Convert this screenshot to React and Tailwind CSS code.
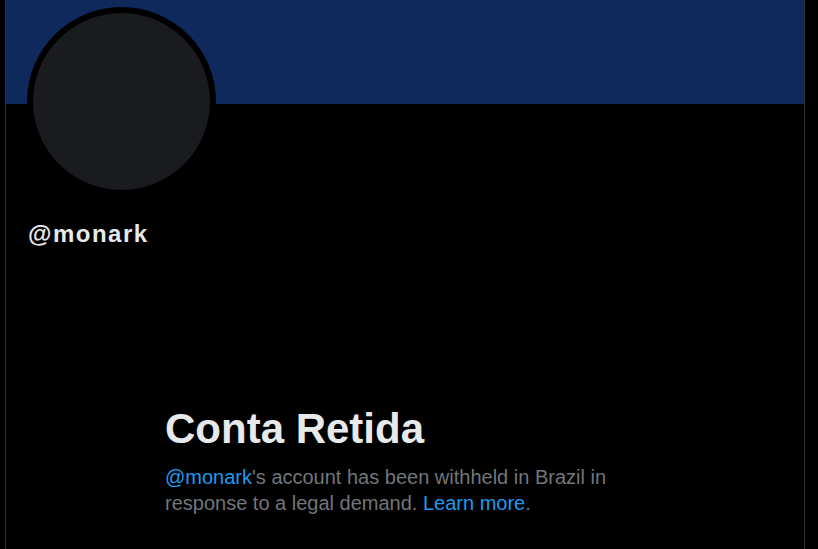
import React from 'react';

const WithheldProfile = () => {
  return (
    <div className="min-h-screen bg-black" style={{ fontFamily: '"Liberation Sans", Arial, sans-serif' }}>
      <div className="ml-[5px] w-[800px] min-h-[549px] border-x border-[#2f3336] relative">
        {/* Banner */}
        <div className="h-[104px] bg-[#0f295c]" />

        {/* Avatar */}
        <div className="absolute left-[21px] top-[7px] w-[189px] h-[189px] rounded-full bg-black p-[6px]">
          <div className="w-full h-full rounded-full bg-[#1a1b1e]" />
        </div>

        {/* Handle */}
        <div className="pl-[22px] pt-[116px]">
          <h1 className="text-[24px] leading-[28px] font-bold tracking-[1.5px] text-[#e7e9ea]">@monark</h1>
        </div>

        {/* Withheld notice */}
        <div className="pl-[159px] pt-[157px] w-[620px]">
          <h2 className="text-[42px] leading-[48px] font-bold text-[#e7e9ea]">Conta Retida</h2>
          <p className="mt-[11px] w-[460px] text-[20px] leading-[26px] text-[#71767b]">
            <span className="text-[#1d9bf0]">@monark</span>'s account has been withheld in Brazil in response to a legal demand.{' '}
            <span className="text-[#1d9bf0]">Learn more</span>.
          </p>
        </div>
      </div>
    </div>
  );
};

export default function App() {
  return <WithheldProfile />;
}
